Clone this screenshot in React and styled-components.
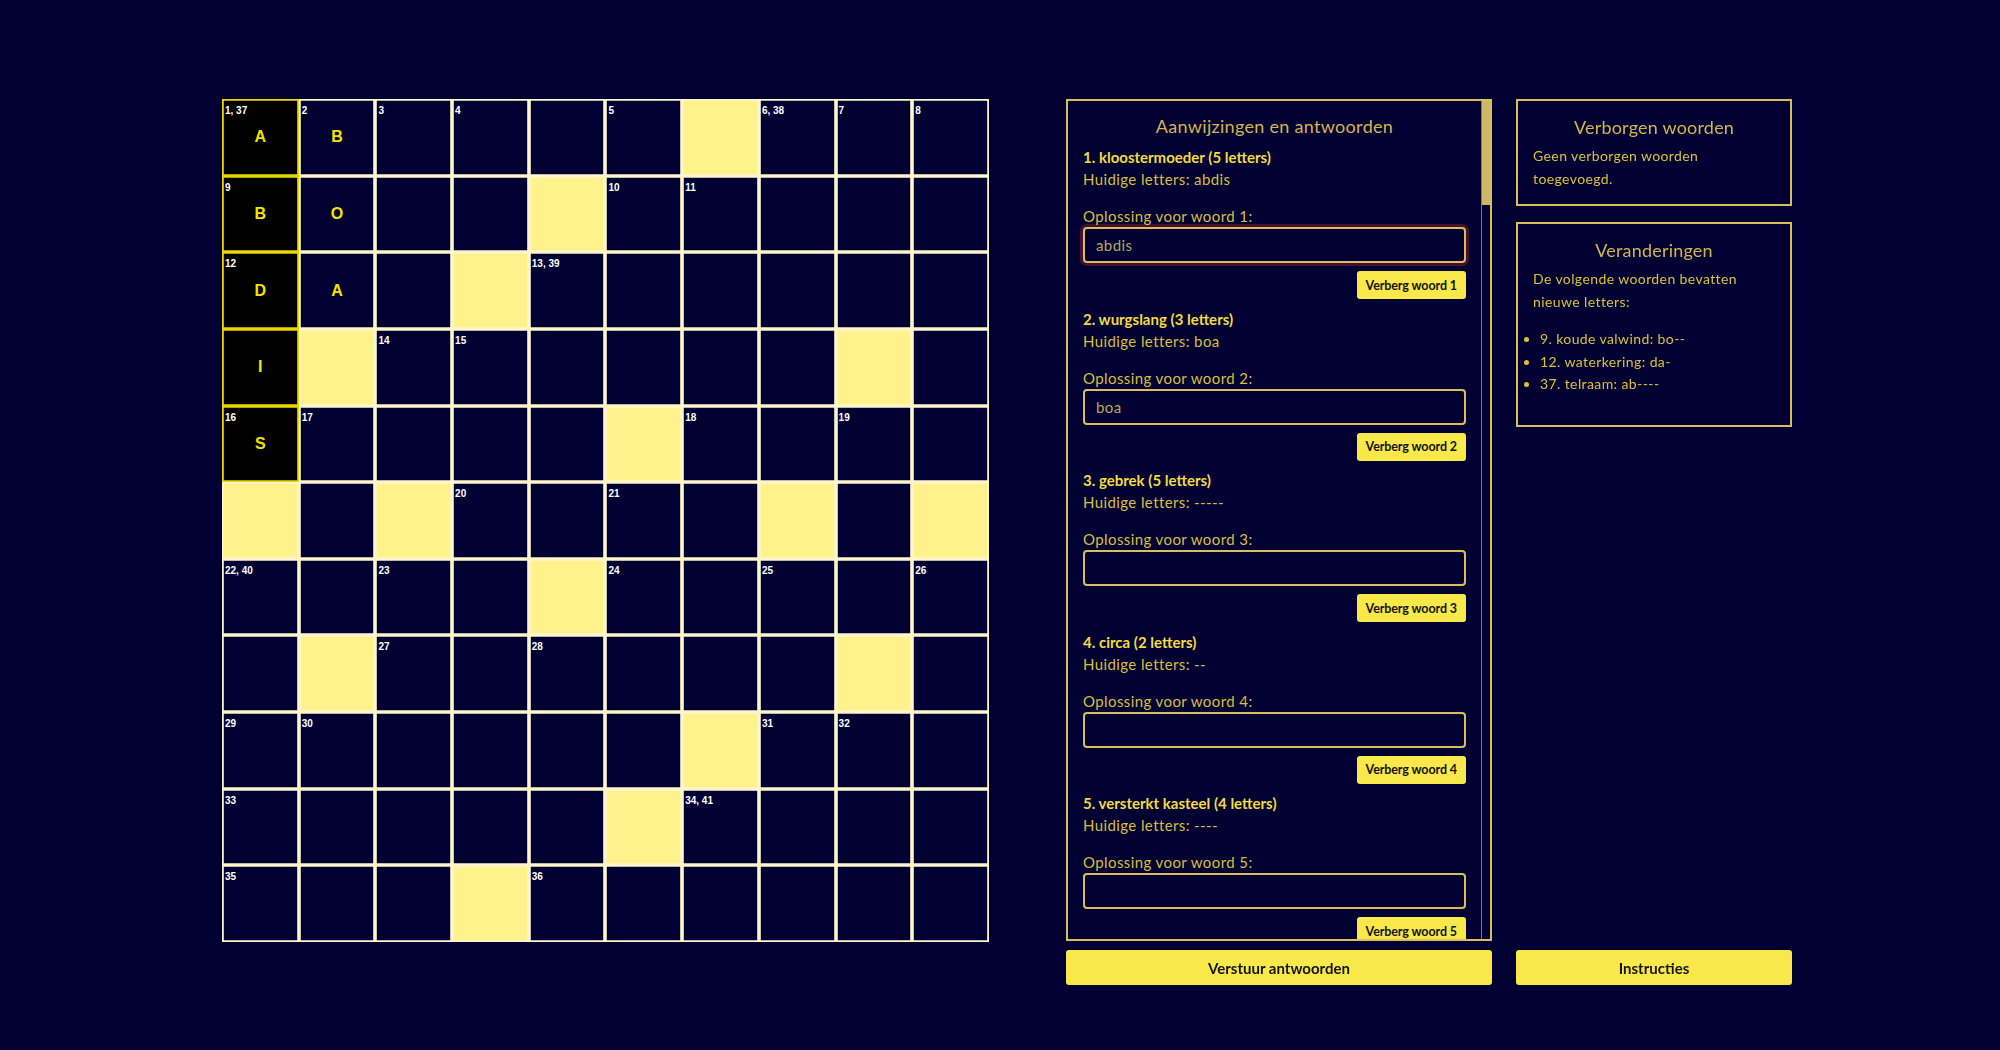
import React from "react";
import styled, { createGlobalStyle } from "styled-components";

const rows = [
  ["1, 37|A|*", "2|B", "3", "4", "", "5", "#", "6, 38", "7", "8"],
  ["9|B|*", "|O", "", "", "#", "10", "11", "", "", ""],
  ["12|D|*", "|A", "", "#", "13, 39", "", "", "", "", ""],
  ["|I|*", "#", "14", "15", "", "", "", "", "#", ""],
  ["16|S|*", "17", "", "", "", "#", "18", "", "19", ""],
  ["#", "", "#", "20", "", "21", "", "#", "", "#"],
  ["22, 40", "", "23", "", "#", "24", "", "25", "", "26"],
  ["", "#", "27", "", "28", "", "", "", "#", ""],
  ["29", "30", "", "", "", "", "#", "31", "32", ""],
  ["33", "", "", "", "", "#", "34, 41", "", "", ""],
  ["35", "", "", "#", "36", "", "", "", "", ""]
];

const clues = [
  { n: 1, text: "kloostermoeder", len: 5, current: "abdis", value: "abdis", focus: true },
  { n: 2, text: "wurgslang", len: 3, current: "boa", value: "boa" },
  { n: 3, text: "gebrek", len: 5, current: "-----", value: "" },
  { n: 4, text: "circa", len: 2, current: "--", value: "" },
  { n: 5, text: "versterkt kasteel", len: 4, current: "----", value: "" }
];

const changes = ["9. koude valwind: bo--", "12. waterkering: da-", "37. telraam: ab----"];

const GlobalStyle = createGlobalStyle`
  html, body {
    margin: 0;
    background: #000033;
  }
  body {
    font-family: Lato, "Noto Sans", sans-serif;
  }
`;

const Page = styled.div`
  min-height: 1050px;
  box-sizing: border-box;
  display: flex;
  align-items: flex-start;
  padding: 99px 0 0 222px;
`;

const Board = styled.div`
  display: grid;
  grid-template-columns: repeat(10, 1fr);
  grid-template-rows: repeat(11, 1fr);
  width: 767px;
  height: 843px;
`;

const Cell = styled.div`
  position: relative;
  display: flex;
  align-items: center;
  justify-content: center;
  background: ${p => (p.$block ? "#fff18c" : p.$active ? "#000000" : "#000033")};
  box-shadow: inset 0 0 0 1.8px ${p => (p.$active ? "#e8d800" : "#fff5cc")};
  font: bold 16px "Liberation Sans", Arial, sans-serif;
  color: #f2e400;
`;

const Num = styled.span`
  position: absolute;
  top: 6px;
  left: 3px;
  font: bold 10px/1.15 "Liberation Sans", Arial, sans-serif;
  color: #ffffff;
`;

const ClueColumn = styled.div`
  width: 426px;
  margin-left: 77px;
  display: flex;
  flex-direction: column;
  gap: 9px;
`;

const CluePanel = styled.section`
  height: 842px;
  box-sizing: border-box;
  border: 2px solid #d8be5c;
  display: flex;
  overflow: hidden;
`;

const ClueScroll = styled.div`
  flex: 1;
  padding: 12px 15px 0;
  overflow: hidden;
`;

const ScrollTrack = styled.div`
  width: 8px;
  border-left: 1px solid #8c7c44;
  display: flex;
  flex-direction: column;
`;

const ScrollThumb = styled.div`
  height: 104px;
  background: #cdb765;
`;

const PanelTitle = styled.h2`
  margin: 0 0 7px;
  font-size: 18px;
  font-weight: 400;
  line-height: 26px;
  letter-spacing: 0.3px;
  text-align: center;
  color: #d6b44c;
`;

const Clue = styled.div`
  margin-bottom: 8.5px;
`;

const ClueTitle = styled.h3`
  margin: 0;
  font-size: 15px;
  font-weight: 700;
  line-height: 22px;
  color: #f3dc3c;
`;

const Current = styled.p`
  margin: 0;
  font-size: 15px;
  line-height: 22px;
  letter-spacing: 0.4px;
  color: #d8bf3c;
`;

const Label = styled.label`
  display: block;
  margin-top: 15px;
  font-size: 15px;
  line-height: 22px;
  letter-spacing: 0.4px;
  color: #d8bf3c;
`;

const AnswerInput = styled.input`
  display: block;
  width: 100%;
  height: 36px;
  box-sizing: border-box;
  margin: 0;
  padding: 0 11px;
  border: 2px solid #d8be5c;
  border-radius: 4px;
  background: #000033;
  color: #bba75e;
  font: 15px Lato, sans-serif;
  letter-spacing: 0.4px;
  outline: none;
  caret-color: #e8e0c0;
  box-shadow: ${p => (p.$focused ? "0 0 0 3px #46102f" : "none")};
`;

const HideButton = styled.button`
  display: block;
  margin: 8px 0 0 auto;
  height: 28px;
  padding: 0 9px;
  border: none;
  border-radius: 3px;
  background: #f8e84a;
  color: #141414;
  font: bold 12.5px Lato, sans-serif;
  letter-spacing: -0.1px;
`;

const WideButton = styled.button`
  width: 100%;
  height: 35px;
  border: none;
  border-radius: 3px;
  background: #f8e84a;
  color: #141414;
  font: bold 15px Lato, sans-serif;
`;

const SideColumn = styled.div`
  width: 276px;
  height: 886px;
  margin-left: 24px;
  display: flex;
  flex-direction: column;
  justify-content: space-between;
`;

const SideBoxes = styled.div`
  display: flex;
  flex-direction: column;
  gap: 16px;
`;

const InfoBox = styled.section`
  border: 2px solid #d8be5c;
  padding: 13px 0 14px;
`;

const BoxTitle = styled.h2`
  margin: 0 0 5px;
  font-size: 18px;
  font-weight: 400;
  line-height: 26px;
  letter-spacing: 0.2px;
  text-align: center;
  color: #d6b44c;
`;

const BoxText = styled.p`
  margin: 0;
  padding: 0 15px;
  font-size: 14px;
  line-height: 22.5px;
  letter-spacing: 0.4px;
  color: #dcc236;
`;

const ChangeList = styled.ul`
  margin: 15px 0;
  padding-left: 22px;
  font-size: 14px;
  line-height: 22.5px;
  letter-spacing: 0.4px;
  color: #dcc236;
`;

function parseCell(spec) {
  if (spec === "#") return { block: true };
  const [num, letter, active] = spec.split("|");
  return { num, letter, active: active === "*" };
}

export default function App() {
  return (
    <>
      <GlobalStyle />
      <Page>
        <Board>
          {rows.map((row, r) =>
            row.map((spec, c) => {
              const cell = parseCell(spec);
              return (
                <Cell key={r + "-" + c} $block={cell.block} $active={cell.active}>
                  {cell.num && <Num>{cell.num}</Num>}
                  {cell.letter}
                </Cell>
              );
            })
          )}
        </Board>

        <ClueColumn>
          <CluePanel>
            <ClueScroll>
              <PanelTitle>Aanwijzingen en antwoorden</PanelTitle>
              {clues.map(clue => (
                <Clue key={clue.n}>
                  <ClueTitle>
                    {clue.n}. {clue.text} ({clue.len} letters)
                  </ClueTitle>
                  <Current>Huidige letters: {clue.current}</Current>
                  <Label htmlFor={"answer-" + clue.n}>Oplossing voor woord {clue.n}:</Label>
                  <AnswerInput
                    id={"answer-" + clue.n}
                    defaultValue={clue.value}
                    autoFocus={clue.focus}
                    $focused={clue.focus}
                  />
                  <HideButton>Verberg woord {clue.n}</HideButton>
                </Clue>
              ))}
            </ClueScroll>
            <ScrollTrack>
              <ScrollThumb />
            </ScrollTrack>
          </CluePanel>
          <WideButton>Verstuur antwoorden</WideButton>
        </ClueColumn>

        <SideColumn>
          <SideBoxes>
            <InfoBox>
              <BoxTitle>Verborgen woorden</BoxTitle>
              <BoxText>Geen verborgen woorden toegevoegd.</BoxText>
            </InfoBox>
            <InfoBox>
              <BoxTitle>Veranderingen</BoxTitle>
              <BoxText>De volgende woorden bevatten nieuwe letters:</BoxText>
              <ChangeList>
                {changes.map(item => (
                  <li key={item}>{item}</li>
                ))}
              </ChangeList>
            </InfoBox>
          </SideBoxes>
          <WideButton>Instructies</WideButton>
        </SideColumn>
      </Page>
    </>
  );
}
